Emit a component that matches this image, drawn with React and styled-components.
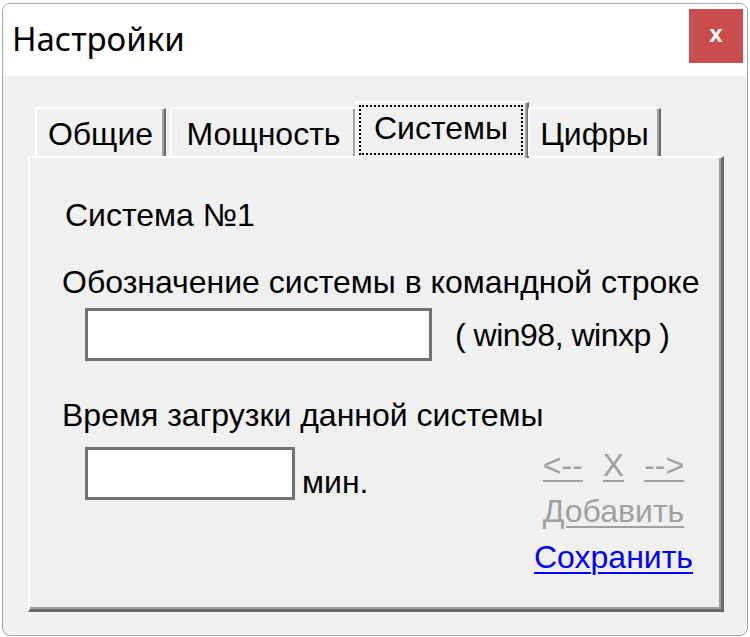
import React from "react";
import styled, { createGlobalStyle } from "styled-components";

const Global = createGlobalStyle`
  html, body { margin: 0; padding: 0; background: #ffffff; }
  body { font-family: "Liberation Sans", Arial, sans-serif; }
`;

const Window = styled.div`
  box-sizing: border-box;
  width: 746px;
  height: 633px;
  margin: 3px 0 0 2px;
  border: 1px solid #a6a6a6;
  border-radius: 8px;
  overflow: hidden;
  background: #f0f0f0;
  display: flex;
  flex-direction: column;
`;

const TitleBar = styled.div`
  height: 72px;
  background: #ffffff;
  display: flex;
  justify-content: space-between;
  align-items: flex-start;
  padding: 0 4px 0 9px;
`;

const Title = styled.div`
  font-family: "Noto Sans", "Liberation Sans", sans-serif;
  font-size: 33px;
  line-height: 70px;
  color: #000;
`;

const CloseButton = styled.div`
  width: 54px;
  height: 54px;
  margin-top: 5px;
  background: #c94d4d;
  color: #fff;
  font-family: "Liberation Sans", Arial, sans-serif;
  font-weight: bold;
  font-size: 24px;
  display: flex;
  align-items: center;
  justify-content: center;
  padding-bottom: 4px;
  box-sizing: border-box;
`;

const Body = styled.div`
  flex: 1;
  display: flex;
  flex-direction: column;
  padding: 25px 23px 23px 25px;
`;

const TabStrip = styled.div`
  display: flex;
  align-items: flex-end;
  padding-left: 7px;
  position: relative;
  z-index: 1;
`;

const Tab = styled.div`
  box-sizing: border-box;
  width: ${(p) => p.$w}px;
  height: ${(p) => (p.$active ? 57 : 49)}px;
  margin: ${(p) => (p.$active ? "0 -1px -2px -6px" : "0 4px 0 0")};
  border-top: 2px solid #ffffff;
  border-left: 2px solid #ffffff;
  border-right: 2px solid #696969;
  box-shadow: inset -2px 0 0 #a0a0a0;
  border-radius: 3px 3px 0 0;
  background: #f0f0f0;
  display: flex;
  align-items: ${(p) => (p.$active ? "stretch" : "center")};
  justify-content: center;
  padding: ${(p) => (p.$active ? "2px 4px 3px 2px" : "4px 0 0 0")};
  font-size: 32px;
  color: #000;
`;

const FocusRing = styled.span`
  flex: 1;
  border: 2px dotted #000;
  display: flex;
  align-items: center;
  justify-content: center;
  padding-bottom: 4px;
`;

const Panel = styled.div`
  flex: 1;
  border-style: solid;
  border-width: 2px 3px 3px 2px;
  border-color: #ffffff #696969 #696969 #ffffff;
  box-shadow: inset -2px -2px 0 #a0a0a0;
  display: flex;
  flex-direction: column;
  padding: 39px 30px 0 32px;
  font-size: 32px;
  color: #000;
`;

const Line = styled.div`
  line-height: 36px;
  margin-left: ${(p) => p.$indent || 0}px;
  margin-top: ${(p) => p.$mt || 0}px;
  white-space: nowrap;
`;

const FieldRow = styled.div`
  display: flex;
  align-items: ${(p) => p.$align || "center"};
  margin-top: ${(p) => p.$mt || 0}px;
  padding-left: 23px;
`;

const TextBox = styled.div`
  box-sizing: border-box;
  width: ${(p) => p.$w}px;
  height: 53px;
  background: #ffffff;
  border: 3px solid #727272;
  flex-shrink: 0;
`;

const Hint = styled.span`
  margin-left: ${(p) => p.$ml}px;
  white-space: nowrap;
  line-height: 36px;
  letter-spacing: ${(p) => p.$ls || 0}px;
`;

const BottomRow = styled.div`
  display: flex;
  align-items: flex-start;
  margin-top: 14px;
`;

const Links = styled.div`
  margin-left: auto;
  display: flex;
  flex-direction: column;
  align-items: center;
  gap: 10px;
  margin-right: -2px;
`;

const NavRow = styled.div`
  display: flex;
  gap: 20px;
`;

const LinkText = styled.span`
  color: ${(p) => (p.$disabled ? "#a0a0a0" : "#0000ff")};
  text-decoration: underline;
  text-decoration-thickness: 2px;
  text-underline-offset: 4px;
  line-height: 36px;
  white-space: nowrap;
  cursor: ${(p) => (p.$disabled ? "default" : "pointer")};
`;

export default function App() {
  return (
    <>
      <Global />
      <Window>
        <TitleBar>
          <Title>Настройки</Title>
          <CloseButton>x</CloseButton>
        </TitleBar>
        <Body>
          <TabStrip>
            <Tab $w={131}>Общие</Tab>
            <Tab $w={187}>Мощность</Tab>
            <Tab $w={174} $active>
              <FocusRing>Системы</FocusRing>
            </Tab>
            <Tab $w={133}>Цифры</Tab>
          </TabStrip>
          <Panel>
            <Line $indent={3}>Система №1</Line>
            <Line $mt={31}>Обозначение системы в командной строке</Line>
            <FieldRow $mt={8}>
              <TextBox $w={347} />
              <Hint $ml={23} $ls={-0.5}>( win98, winxp )</Hint>
            </FieldRow>
            <Line $mt={36}>Время загрузки данной системы</Line>
            <BottomRow>
              <FieldRow $align="flex-end">
                <TextBox $w={210} />
                <Hint $ml={7}>мин.</Hint>
              </FieldRow>
              <Links>
                <NavRow>
                  <LinkText $disabled>&lt;--</LinkText>
                  <LinkText $disabled>X</LinkText>
                  <LinkText $disabled>--&gt;</LinkText>
                </NavRow>
                <LinkText $disabled>Добавить</LinkText>
                <LinkText>Сохранить</LinkText>
              </Links>
            </BottomRow>
          </Panel>
        </Body>
      </Window>
    </>
  );
}
